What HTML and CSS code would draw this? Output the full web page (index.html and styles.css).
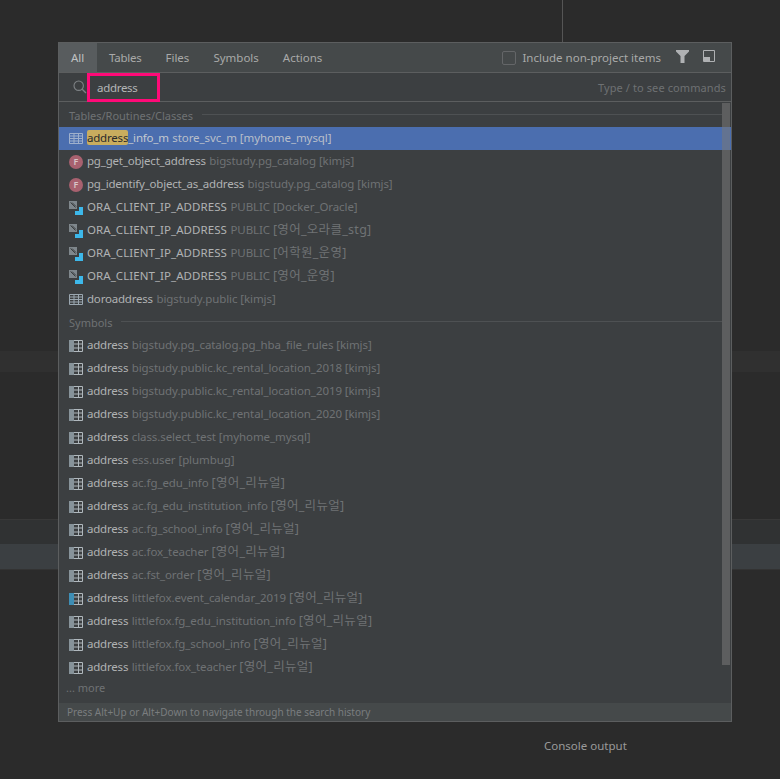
FILE: index.html
```html
<!DOCTYPE html>
<html lang="ko">
<head>
<meta charset="utf-8">
<title>Search Everywhere</title>
<link rel="stylesheet" href="styles.css">
</head>
<body>
<svg width="0" height="0" class="defs">
  <symbol id="i-table" viewBox="0 0 14 11">
    <path d="M0.500 0.500h13v10h-13z M0.500 3h13 M0.500 5.500h13 M0.500 8h13 M5 0.500v10 M9.500 0.500v10" fill="none" stroke="currentColor"/>
  </symbol>
  <symbol id="i-col" viewBox="0 0 14 12">
    <path d="M0 0h5v12h-5z" fill="currentColor"/>
    <path d="M5 0.500h8.500v11h-8.500 M5 4h8.500 M5 8h8.500 M9.500 0.500v11" fill="none" stroke="#b0b8bd"/>
  </symbol>
  <symbol id="i-syn" viewBox="0 0 14 14">
    <path d="M0 0h8v8h-8z" fill="#7f878c"/>
    <path d="M1.500 1.500l5 5M3 1.500l4 4" stroke="#3c3f41" fill="none"/>
    <path d="M10 6h4v8h-8v-4h4z" fill="#3db8ea"/>
  </symbol>
</svg>
<div class="backdrop">
  <div class="divider-top"></div>
  <div class="stripe-a"></div>
  <div class="gap-a"></div>
  <div class="stripe-b"></div>
  <div class="stripe-c"></div>
  <div class="bottom"><span class="console">Console output</span></div>
</div>
<div class="dialog">
  <div class="tabs">
    <span class="tab active">All</span>
    <span class="tab tight">Tables</span>
    <span class="tab">Files</span>
    <span class="tab">Symbols</span>
    <span class="tab">Actions</span>
    <label class="include"><span class="checkbox"></span>Include non-project items</label>
    <svg class="filter" width="14" height="13" viewBox="0 0 14 13"><path d="M0 0h13v1.500l-4.500 4.500v7h-4v-7l-4.500-4.500z" fill="#afb1b3"/></svg>
    <svg class="pin" width="13" height="13" viewBox="0 0 13 13"><path d="M0.500 0.500h11v11h-11z" fill="none" stroke="#afb1b3"/><path d="M1 7h6v4h-6z" fill="#afb1b3"/></svg>
  </div>
  <div class="search">
    <svg class="lens" width="14" height="14" viewBox="0 0 14 14"><circle cx="5.700" cy="5.700" r="4.700" fill="none" stroke="#7f8386" stroke-width="1.100"/><path d="M9.200 9.200l3.800 3.800" stroke="#7f8386" stroke-width="1.300"/></svg>
    <span class="query">address</span>
    <span class="hint">Type / to see commands</span>
  </div>
  <div class="results">
    <div class="list">
      <div class="section first"><span>Tables/Routines/Classes</span></div>
      <div class="row selected"><svg class="ico table-sel"><use href="#i-table"/></svg><span class="name"><mark>address</mark>_info_m</span><span class="loc">store_svc_m [myhome_mysql]</span></div>
      <div class="row"><span class="fn">F</span><span class="name">pg_get_object_address</span><span class="loc">bigstudy.pg_catalog [kimjs]</span></div>
      <div class="row"><span class="fn">F</span><span class="name">pg_identify_object_as_address</span><span class="loc">bigstudy.pg_catalog [kimjs]</span></div>
      <div class="row"><svg class="ico"><use href="#i-syn"/></svg><span class="name upper">ORA_CLIENT_IP_ADDRESS</span><span class="loc">PUBLIC [Docker_Oracle]</span></div>
      <div class="row"><svg class="ico"><use href="#i-syn"/></svg><span class="name upper">ORA_CLIENT_IP_ADDRESS</span><span class="loc">PUBLIC <span class="ko">[영어_오라클_stg]</span></span></div>
      <div class="row"><svg class="ico"><use href="#i-syn"/></svg><span class="name upper">ORA_CLIENT_IP_ADDRESS</span><span class="loc">PUBLIC <span class="ko">[어학원_운영]</span></span></div>
      <div class="row"><svg class="ico"><use href="#i-syn"/></svg><span class="name upper">ORA_CLIENT_IP_ADDRESS</span><span class="loc">PUBLIC <span class="ko">[영어_운영]</span></span></div>
      <div class="row"><svg class="ico table"><use href="#i-table"/></svg><span class="name">doroaddress</span><span class="loc">bigstudy.public [kimjs]</span></div>
      <div class="section"><span>Symbols</span></div>
      <div class="row"><svg class="ico col"><use href="#i-col"/></svg><span class="name">address</span><span class="loc">bigstudy.pg_catalog.pg_hba_file_rules [kimjs]</span></div>
      <div class="row"><svg class="ico col"><use href="#i-col"/></svg><span class="name">address</span><span class="loc">bigstudy.public.kc_rental_location_2018 [kimjs]</span></div>
      <div class="row"><svg class="ico col"><use href="#i-col"/></svg><span class="name">address</span><span class="loc">bigstudy.public.kc_rental_location_2019 [kimjs]</span></div>
      <div class="row"><svg class="ico col"><use href="#i-col"/></svg><span class="name">address</span><span class="loc">bigstudy.public.kc_rental_location_2020 [kimjs]</span></div>
      <div class="row"><svg class="ico col"><use href="#i-col"/></svg><span class="name">address</span><span class="loc">class.select_test [myhome_mysql]</span></div>
      <div class="row"><svg class="ico col"><use href="#i-col"/></svg><span class="name">address</span><span class="loc">ess.user [plumbug]</span></div>
      <div class="row"><svg class="ico col"><use href="#i-col"/></svg><span class="name">address</span><span class="loc">ac.fg_edu_info <span class="ko">[영어_리뉴얼]</span></span></div>
      <div class="row"><svg class="ico col"><use href="#i-col"/></svg><span class="name">address</span><span class="loc">ac.fg_edu_institution_info <span class="ko">[영어_리뉴얼]</span></span></div>
      <div class="row"><svg class="ico col"><use href="#i-col"/></svg><span class="name">address</span><span class="loc">ac.fg_school_info <span class="ko">[영어_리뉴얼]</span></span></div>
      <div class="row"><svg class="ico col"><use href="#i-col"/></svg><span class="name">address</span><span class="loc">ac.fox_teacher <span class="ko">[영어_리뉴얼]</span></span></div>
      <div class="row"><svg class="ico col"><use href="#i-col"/></svg><span class="name">address</span><span class="loc">ac.fst_order <span class="ko">[영어_리뉴얼]</span></span></div>
      <div class="row"><svg class="ico col-blue"><use href="#i-col"/></svg><span class="name">address</span><span class="loc">littlefox.event_calendar_2019 <span class="ko">[영어_리뉴얼]</span></span></div>
      <div class="row"><svg class="ico col"><use href="#i-col"/></svg><span class="name">address</span><span class="loc">littlefox.fg_edu_institution_info <span class="ko">[영어_리뉴얼]</span></span></div>
      <div class="row"><svg class="ico col"><use href="#i-col"/></svg><span class="name">address</span><span class="loc">littlefox.fg_school_info <span class="ko">[영어_리뉴얼]</span></span></div>
      <div class="row"><svg class="ico col"><use href="#i-col"/></svg><span class="name">address</span><span class="loc">littlefox.fox_teacher <span class="ko">[영어_리뉴얼]</span></span></div>
      <div class="more">... more</div>
    </div>
    <div class="scrollbar"></div>
  </div>
  <div class="footer">Press Alt+Up or Alt+Down to navigate through the search history</div>
</div>
<div class="annotation"></div>
</body>
</html>
```

FILE: styles.css
```css
* { box-sizing: border-box; }
html, body { margin: 0; height: 100%; }
body {
  background: #2b2b2b;
  font-family: "Noto Sans", "Noto Sans CJK KR", sans-serif;
  font-size: 11.5px;
  overflow: hidden;
  position: relative;
}
.defs { position: absolute; }
.backdrop { width: 780px; height: 779px; display: flex; flex-direction: column; }
.divider-top { height: 351px; position: relative; }
.divider-top::after {
  content: "";
  position: absolute;
  left: 562px;
  top: 0;
  width: 1px;
  height: 42px;
  background: #555;
}
.stripe-a { height: 21px; background: #303030; }
.gap-a { height: 147px; }
.stripe-b { height: 25px; background: #303233; border-top: 1px solid #383838; }
.stripe-c { height: 26px; background: #3b3f42; border-bottom: 1px solid #333; }
.bottom { flex: 1; position: relative; }
.console { position: absolute; left: 544px; top: 168px; color: #9a9a9a; line-height: 16px; }

.dialog {
  position: absolute;
  left: 58px;
  top: 42px;
  width: 674px;
  height: 680px;
  background: #3c3f41;
  border: 1px solid #5c5e5f;
  display: flex;
  flex-direction: column;
}
.tabs {
  height: 30px;
  flex: none;
  display: flex;
  align-items: center;
  background: #45494a;
  border-bottom: 1px solid #5c5e5f;
  color: #a9a9a9;
}
.tab { padding: 0 12px; height: 29px; line-height: 30px; }
.tab.tight { letter-spacing: -0.25px; }
.tab.active { background: #585c5e; color: #c0c2c3; padding: 0 12px; width: 38px; }
.include { margin-left: auto; display: flex; align-items: center; color: #a9a9a9; }
.checkbox {
  width: 14px;
  height: 14px;
  border: 1px solid #646668;
  border-radius: 2px;
  margin-right: 6px;
}
.filter { margin: 0 0 2px 15px; }
.pin { margin: 0 15px 2px 13px; }

.search {
  height: 29px;
  flex: none;
  display: flex;
  align-items: center;
  border-bottom: 1px solid #5c5e5f;
  padding-left: 14px;
  color: #a9a9a9;
}
.lens { flex: none; }
.query { margin-left: 10px; color: #b4b6b7; letter-spacing: -0.3px; }
.hint { margin-left: auto; margin-right: 5px; color: #6e7173; letter-spacing: 0.1px; font-size: 11px; }

.results { flex: 1; position: relative; min-height: 0; }
.list { display: flex; flex-direction: column; }
.section {
  height: 23px;
  flex: none;
  display: flex;
  align-items: center;
  padding: 0 9px 0 10px;
  color: #6f7274;
  gap: 9px;
  font-size: 11px;
}
.section.first { height: 25px; padding-top: 2px; }
.section::after { content: ""; flex: 1; height: 1px; margin-top: -3px; background: #4e5153; }
.row {
  height: 23px;
  flex: none;
  display: flex;
  align-items: center;
  padding-left: 10px;
  color: #b0b2b3;
  white-space: pre;
}
.name { letter-spacing: -0.2px; padding-bottom: 2px; }
.name.upper { letter-spacing: 0.06px; }
.row .loc { color: #6f7274; margin-left: 3.5px; letter-spacing: -0.08px; padding-bottom: 2px; }
.ko { font-size: 12.5px; letter-spacing: 0.3px; line-height: 1; }
.row.selected { background: #4b6eaf; color: #c4c9d0; }
.row.selected .loc { color: #b9bfca; }
mark { background: #c9ad5e; color: #2b2b2b; border-radius: 2px; padding: 0; }
.ico { width: 14px; height: 14px; margin-right: 4px; flex: none; }
.ico.table { color: #9aa7b0; height: 11px; }
.ico.table-sel { color: #9fb0cc; height: 11px; }
.ico.col { color: #87939a; height: 12px; }
.ico.col-blue { color: #3e8eb5; height: 12px; }
.fn {
  width: 14px;
  height: 14px;
  border-radius: 50%;
  background: #a8616f;
  color: #d9c5c9;
  font-size: 9px;
  font-weight: 600;
  line-height: 14px;
  text-align: center;
  margin-right: 4px;
  flex: none;
}
.more { height: 18px; line-height: 18px; padding-left: 7px; color: #6f7274; font-size: 11px; }
.scrollbar {
  position: absolute;
  right: 1px;
  top: 1px;
  width: 8px;
  height: 562px;
  background: rgba(120, 120, 120, 0.55);
}
.footer {
  height: 18px;
  flex: none;
  background: #45494a;
  color: #7a7d7f;
  font-size: 10px;
  line-height: 18px;
  padding-left: 8px;
}
.annotation {
  position: absolute;
  left: 87px;
  top: 73px;
  width: 73px;
  height: 29px;
  border: 3px solid #ff0a78;
}
```
